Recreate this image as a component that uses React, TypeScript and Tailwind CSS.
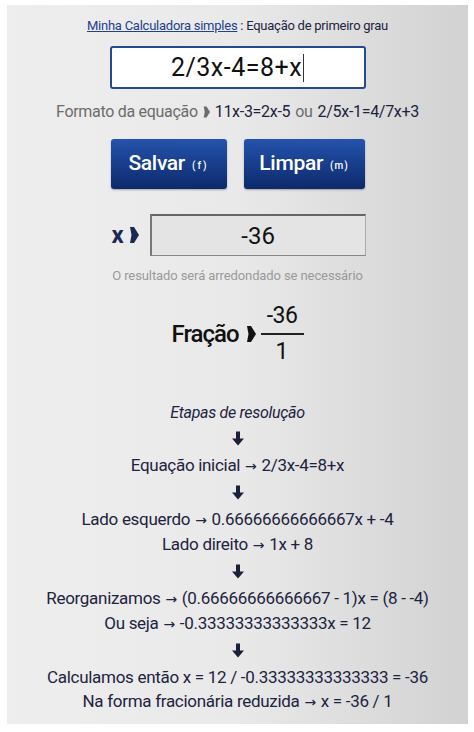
function Pointer({ className = "" }: { className?: string }) {
  return (
    <svg viewBox="0 0 10 16" className={className} fill="currentColor">
      <path d="M1 0 H5 L10 8 L5 16 H1 L2.5 8 Z" />
    </svg>
  );
}

function DownArrow() {
  return (
    <svg viewBox="0 0 12 14" className="w-[12px] h-[15px] text-[#1b2138]" fill="currentColor">
      <path d="M4 0 H8 V7 H12 L6 14 L0 7 H4 Z" />
    </svg>
  );
}

function To() {
  return <span className="font-['DejaVu_Sans',sans-serif] text-[14px] px-[1px]">→</span>;
}

function Step({ children }: { children: React.ReactNode }) {
  return <div className="text-[17px] leading-[24px] tracking-[-0.3px] text-[#1d2340]">{children}</div>;
}

export default function App() {
  return (
    <div className="min-h-screen bg-white pt-[5px] pl-[7px] font-['Roboto',sans-serif]">
      <div className="w-[461px] h-[719px] bg-gradient-to-r from-[#eeeeee] via-[#e9e9e9] to-[#d2d2d2] flex flex-col items-center text-[#1d2340]">
        {/* title */}
        <div className="mt-[12px] text-[13px] leading-[18px] tracking-[-0.25px]">
          <span className="text-[#23408f] underline">Minha Calculadora simples</span>
          <span className="text-[#1d2340]"> : Equação de primeiro grau</span>
        </div>

        {/* equation input */}
        <div className="mt-[11px] w-[256px] h-[43px] bg-white border-2 border-[#234a8c] rounded-[3px] flex items-center justify-center">
          <span className="text-[25px] tracking-[0.5px] text-[#111]">2/3x-4=8+x</span>
          <span className="w-px h-[28px] bg-[#333] ml-[1px]" />
        </div>

        {/* format hint */}
        <div className="mt-[11px] flex items-center gap-[5px] text-[16px] leading-[24px] tracking-[-0.3px]">
          <span className="text-[#6c6c6c]">Formato da equação</span>
          <Pointer className="w-[7px] h-[12px] text-[#6c6c6c]" />
          <span className="text-[#1d2340]">11x-3=2x-5</span>
          <span className="text-[#6c6c6c]">ou</span>
          <span className="text-[#1d2340]">2/5x-1=4/7x+3</span>
        </div>

        {/* buttons */}
        <div className="mt-[15px] flex gap-[17px]">
          <button className="w-[116px] h-[50px] rounded-[3px] bg-gradient-to-b from-[#2553ad] to-[#0c2a6b] text-white flex items-center justify-center gap-[7px] shadow-[0_1px_2px_rgba(0,0,0,0.3)]">
            <span className="text-[21px] font-medium tracking-[-0.3px]">Salvar</span>
            <span className="text-[10px] font-medium tracking-[2px] mt-[3px]">(f)</span>
          </button>
          <button className="w-[121px] h-[50px] rounded-[3px] bg-gradient-to-b from-[#2553ad] to-[#0c2a6b] text-white flex items-center justify-center gap-[7px] shadow-[0_1px_2px_rgba(0,0,0,0.3)]">
            <span className="text-[21px] font-medium tracking-[-0.3px]">Limpar</span>
            <span className="text-[10px] font-medium tracking-[1px] mt-[3px]">(m)</span>
          </button>
        </div>

        {/* result */}
        <div className="mt-[25px] flex items-center w-[256px]">
          <span className="text-[24px] font-bold text-[#1b2a55] ml-[2px] leading-none">x</span>
          <Pointer className="w-[10px] h-[16px] text-[#1b2a55] ml-[5px]" />
          <div className="ml-[11px] flex-1 h-[42px] bg-[#e4e4e4] border-t-2 border-l-2 border-b border-r border-t-[#666] border-l-[#777] border-b-[#888] border-r-[#aaa] flex items-center justify-center">
            <span className="text-[24px] text-[#111]">-36</span>
          </div>
        </div>

        <div className="mt-[11px] text-[13px] leading-[18px] tracking-[-0.1px] text-[#9a9a9a]">O resultado será arredondado se necessário</div>

        {/* fraction */}
        <div className="mt-[16px] flex items-center">
          <span className="text-[24px] font-medium tracking-[-1px] text-[#111]">Fração</span>
          <Pointer className="w-[10px] h-[16px] text-[#111] ml-[7px]" />
          <div className="ml-[5px] flex flex-col items-center">
            <span className="text-[23px] leading-[30px] tracking-[-0.5px] text-[#111] px-[4px]">-36</span>
            <span className="w-[43px] h-[1.5px] bg-[#222] my-[2px]" />
            <span className="text-[23px] leading-[30px] text-[#111]">1</span>
          </div>
        </div>

        {/* steps */}
        <div className="mt-[35px] flex flex-col items-center gap-[7px]">
          <div className="text-[16px] leading-[22px] italic tracking-[-0.3px] text-[#1d2340]">Etapas de resolução</div>
          <DownArrow />
          <Step>Equação inicial <To /> 2/3x-4=8+x</Step>
          <DownArrow />
          <div className="flex flex-col items-center">
            <Step>Lado esquerdo <To /> 0.66666666666667x + -4</Step>
            <Step>Lado direito <To /> 1x + 8</Step>
          </div>
          <DownArrow />
          <div className="flex flex-col items-center">
            <Step>Reorganizamos <To /> (0.66666666666667 - 1)x = (8 - -4)</Step>
            <Step>Ou seja <To /> -0.33333333333333x = 12</Step>
          </div>
          <DownArrow />
          <div className="flex flex-col items-center">
            <Step>Calculamos então x = 12 / -0.33333333333333 = -36</Step>
            <Step>Na forma fracionária reduzida <To /> x = -36 / 1</Step>
          </div>
        </div>
      </div>
    </div>
  );
}
